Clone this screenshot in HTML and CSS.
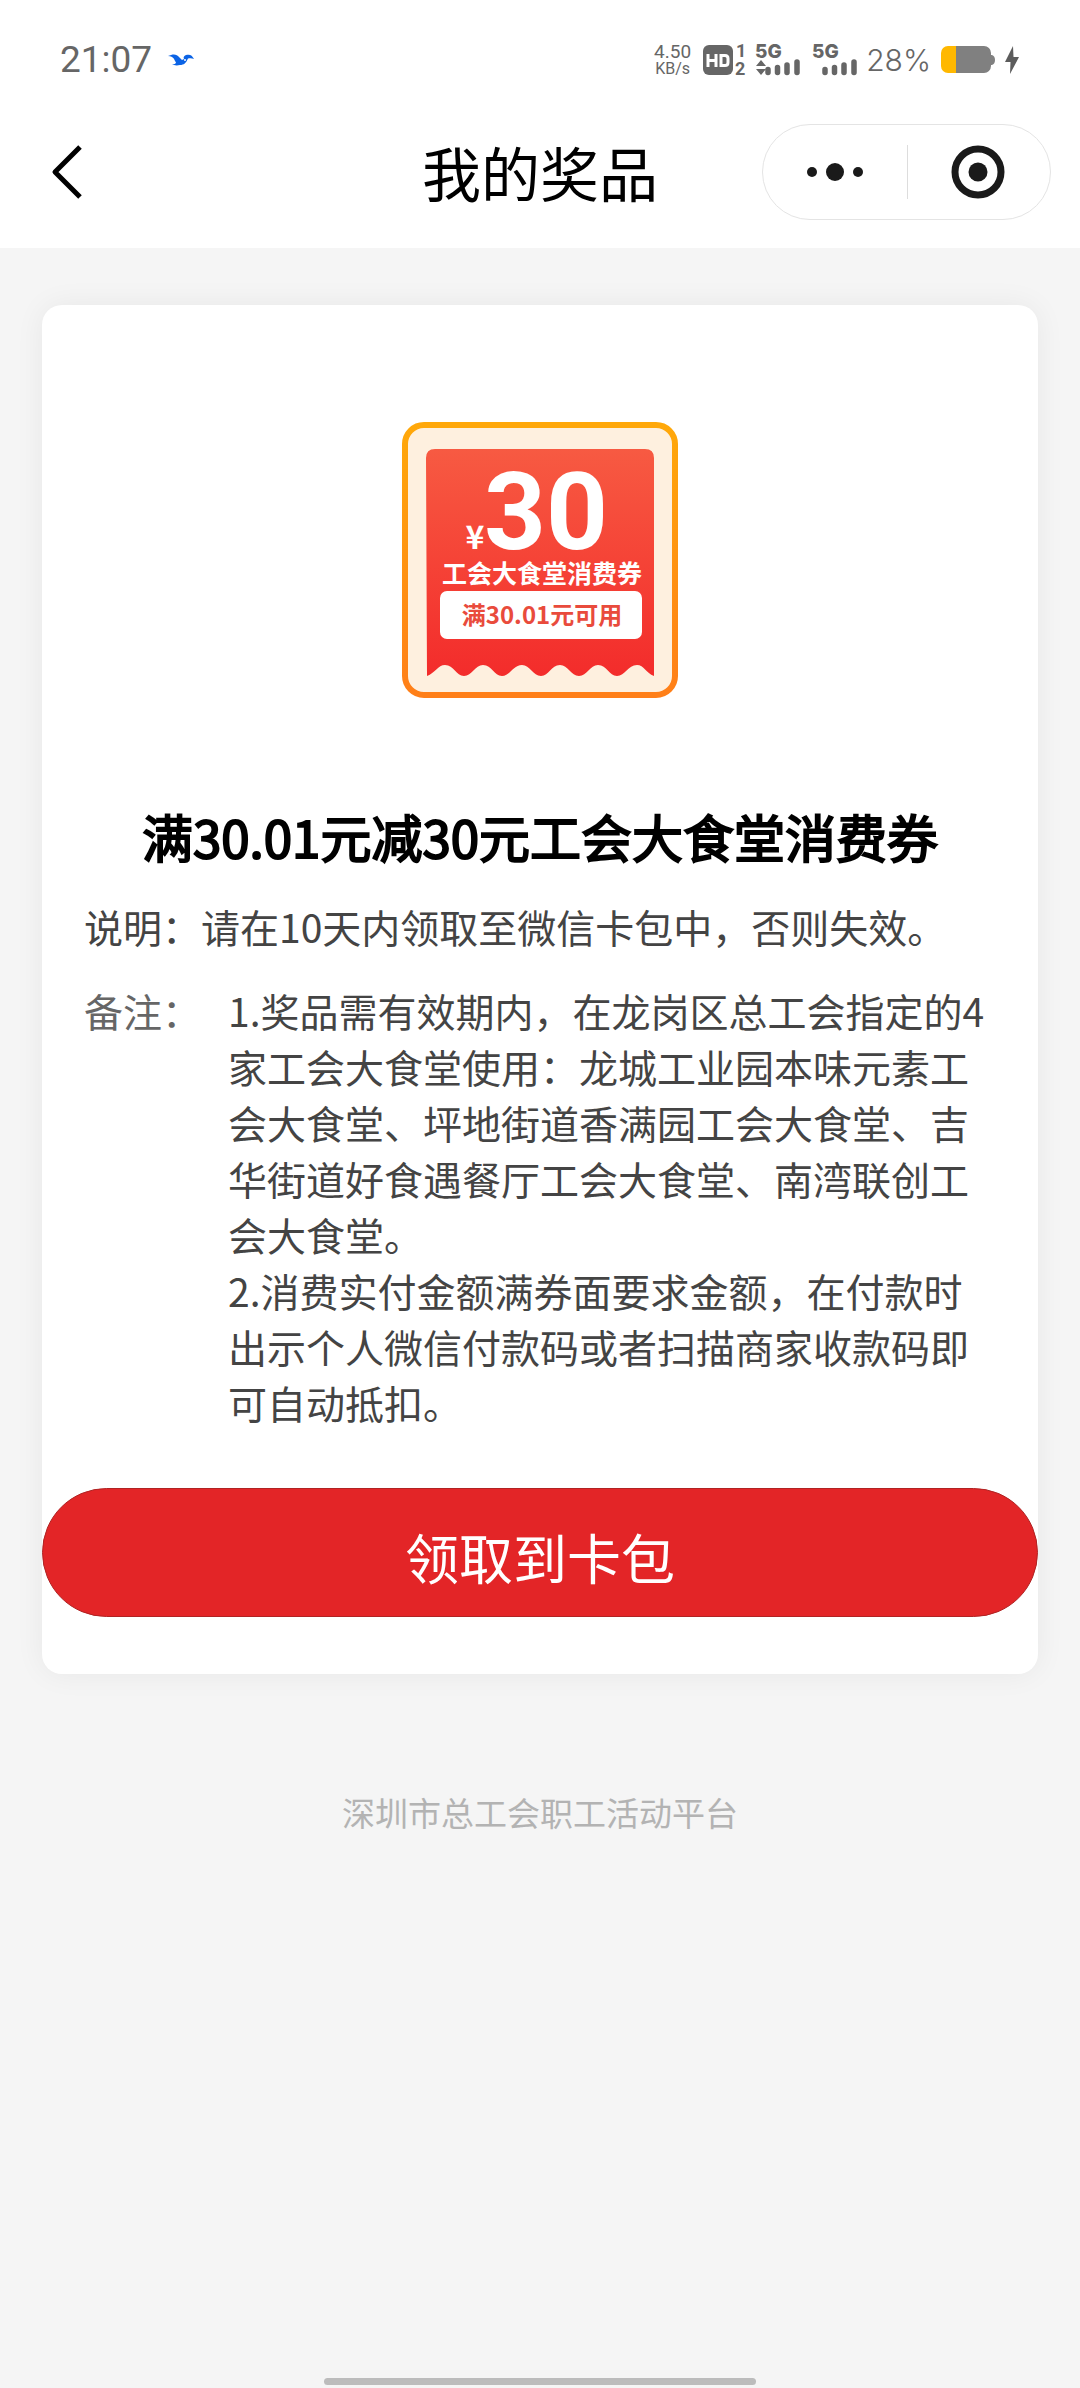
FILE: index.html
```html
<!DOCTYPE html>
<html lang="zh-CN">
<head>
<meta charset="utf-8">
<meta name="viewport" content="width=device-width, initial-scale=1">
<title>我的奖品</title>
<link rel="stylesheet" href="styles.css">
</head>
<body>
<header class="top">
  <div class="status">
    <span class="clock">21:07</span>
    <svg class="bird" width="28" height="12" viewBox="0 0 28 12" aria-hidden="true"><path fill="#0b63e5" d="M0 2C5-.5 9 0 11 3l3 3 2-1c-1-2 0-3 2-4 4-1 6 0 8 4-2-1-4-1-6-.5C18 9 16 11 12 11c-4 1-6 0-8-.5 2 0 4-1 4-2C6 6 6 2 0 2z"/><circle cx="17" cy="6" r="1" fill="#fff"/></svg>
    <div class="indicators">
      <div class="speed"><span>4.50</span><span class="unit">KB/s</span></div>
      <svg class="hd" width="44" height="32" viewBox="0 0 44 32" aria-label="HD">
        <rect x="0" y="1" width="30" height="30" rx="6" fill="#666"/>
        <path d="M5 10v13M13 10v13M5 16.500h8M18 11.500h4q3 0 3 3v4q0 3-3 3h-4z" fill="none" stroke="#fff" stroke-width="3"/>
        <text x="33" y="13" class="tiny">1</text><text x="32" y="31" class="tiny">2</text>
      </svg>
      <svg class="signal" width="46" height="32" viewBox="0 0 46 32" aria-label="5G">
        <text x="0" y="14" class="net">5G</text>
        <path d="M6 16l5 6H1zM6 31l5-6H1z" fill="#666"/>
        <path d="M13 25.500v3M22.500 23.500v5M32 21v7.500M42 18v10.500" stroke="#666" stroke-width="5.500" stroke-linecap="round"/>
      </svg>
      <svg class="signal-two" width="46" height="32" viewBox="0 0 46 32" aria-label="5G">
        <text x="0" y="14" class="net">5G</text>
        <path d="M13 25.500v3M22.500 23.500v5M32 21v7.500M42 18v10.500" stroke="#666" stroke-width="5.500" stroke-linecap="round"/>
      </svg>
      <span class="percent">28%</span>
      <svg class="battery" width="54" height="28" viewBox="0 0 54 28" aria-hidden="true">
        <path d="M15 0h28a7 7 0 0 1 7 7v2h1q3 1 3 5t-3 5h-1v1a7 7 0 0 1-7 7H15z" fill="#808080"/>
        <path d="M15 0H7a7 7 0 0 0-7 7v13a7 7 0 0 0 7 7h8z" fill="#ffb800"/>
      </svg>
      <svg width="14" height="28" viewBox="0 0 14 28" aria-hidden="true"><path d="M8 0L0 16h5.500L5 28l9-17H8.500z" fill="#5c5c5c"/></svg>
    </div>
  </div>
  <nav class="nav">
    <button class="back" aria-label="返回"><svg width="32" height="56" viewBox="0 0 32 56"><path d="M29 3L4 28l25 25" fill="none" stroke="#000" stroke-width="5" stroke-linejoin="round"/></svg></button>
    <h1 class="nav-title">我的奖品</h1>
    <div class="capsule">
      <button class="cap-btn" aria-label="更多"><svg width="56" height="20" viewBox="0 0 56 20"><g fill="#1a1a1a"><circle cx="5" cy="10" r="5"/><circle cx="28" cy="10" r="9"/><circle cx="51" cy="10" r="5"/></g></svg></button>
      <button class="cap-btn" aria-label="关闭"><svg width="54" height="54" viewBox="0 0 54 54"><circle cx="27" cy="27" r="23" fill="none" stroke="#1a1a1a" stroke-width="7"/><circle cx="27" cy="27" r="9.500" fill="#1a1a1a"/></svg></button>
    </div>
  </nav>
</header>
<main class="page">
  <section class="card">
    <svg class="coupon" width="276" height="276" viewBox="0 0 276 276" role="img" aria-label="30元工会大食堂消费券">
      <defs>
        <linearGradient id="frame" x1="0" y1="0" x2="0" y2="1"><stop offset="0" stop-color="#ffa80a"/><stop offset="1" stop-color="#ff7f18"/></linearGradient>
        <linearGradient id="ticket" x1="0" y1="0" x2="0" y2="1"><stop offset="0" stop-color="#f75a42"/><stop offset="1" stop-color="#f32c2b"/></linearGradient>
      </defs>
      <rect x="3" y="3" width="270" height="270" rx="19" fill="#fef0df" stroke="url(#frame)" stroke-width="6"/>
      <path fill="url(#ticket)" d="M24 36q0-9 9-9H243q9 0 9 9V254c-8-3-10-11-17-11c-9 0-12 11-20 11c-8 0-10-11-19-11c-8 0-11 11-19 11c-8 0-11-11-19-11c-9 0-11 11-19 11c-8 0-11-11-19-11c-9 0-12 11-20 11c-8 0-10-11-19-11c-8 0-11 11-19 11c-8 0-10-11-19-11c-7 0-10 8-18 11z"/>
      <text x="144" y="127" class="amount">30</text>
      <text x="73" y="127" class="yen">¥</text>
      <text x="140" y="161" class="caption">工会大食堂消费券</text>
      <rect x="38" y="169" width="202" height="48" rx="7" fill="#fff"/>
      <text x="140" y="202" class="limit">满30.01元可用</text>
    </svg>
    <h2 class="title">满30.01元减30元工会大食堂消费券</h2>
    <p class="desc">说明：请在10天内领取至微信卡包中，否则失效。</p>
    <div class="notes">
      <span class="label">备注：</span>
      <div class="note-text">
        <p>1.奖品需有效期内，在龙岗区总工会指定的4家工会大食堂使用：龙城工业园本味元素工会大食堂、坪地街道香满园工会大食堂、吉华街道好食遇餐厅工会大食堂、南湾联创工会大食堂。</p>
        <p>2.消费实付金额满券面要求金额，在付款时出示个人微信付款码或者扫描商家收款码即可自动抵扣。</p>
      </div>
    </div>
    <button class="claim">领取到卡包</button>
  </section>
  <footer class="footer">深圳市总工会职工活动平台</footer>
</main>
<div class="home-bar"></div>
</body>
</html>
```
FILE: styles.css
```css
* { box-sizing: border-box; }
body {
  margin: 0;
  min-height: 100vh;
  display: flex;
  flex-direction: column;
  background: #f5f5f5;
  color: #444;
  font-family: "Noto Sans CJK SC", sans-serif;
  font-size: 39px;
  line-height: 56px;
}
h1, h2, p { margin: 0; }
svg { display: block; flex: none; overflow: visible; }
button { border: 0; padding: 0; background: none; font: inherit; color: inherit; }

.top { background: #fff; padding-bottom: 24px; }
.status {
  display: flex;
  align-items: center;
  height: 120px;
  padding: 0 61px 0 60px;
  color: #666;
  font-family: Roboto, sans-serif;
}
.clock { font-size: 37px; }
.bird { margin-left: 16px; }
.indicators { display: flex; align-items: center; margin-left: auto; }
.speed { display: flex; flex-direction: column; align-items: center; font-size: 19px; line-height: 17px; }
.unit { font-size: 16px; }
.hd { margin-left: 12px; }
.signal { margin-left: 8px; }
.signal-two { margin-left: 11px; }
.percent { margin: 0 10px 0 8px; font-family: Inter, sans-serif; font-size: 30px; font-weight: 300; }
.battery { margin-right: 10px; }
.tiny { font: bold 18px Roboto, sans-serif; fill: #666; }
.net { font: 800 19px Inter, sans-serif; fill: #666; }

.nav {
  display: grid;
  grid-template-columns: 1fr auto 1fr;
  align-items: center;
  height: 104px;
  padding: 0 29px;
}
.nav-title { font-size: 59px; font-weight: 400; line-height: 72px; color: #000; }
.back { justify-self: start; margin-left: 22px; }
.capsule {
  justify-self: end;
  display: flex;
  width: 289px;
  height: 96px;
  border: 1px solid #e4e4e4;
  border-radius: 48px;
}
.cap-btn { flex: 1; display: flex; align-items: center; justify-content: center; position: relative; }
.cap-btn + .cap-btn::before {
  content: "";
  position: absolute;
  left: 0;
  top: 20px;
  bottom: 20px;
  width: 1px;
  background: #ddd;
}

.page { padding: 57px 42px 0; }
.card {
  background: #fff;
  border-radius: 20px;
  padding: 117px 0 57px;
  box-shadow: 0 0 30px rgba(0, 0, 0, .06);
}
.coupon { margin: 0 auto; }
.coupon text { font-family: "Noto Sans CJK SC", sans-serif; font-weight: 700; fill: #fff; text-anchor: middle; }
.coupon .amount { font-family: Roboto, sans-serif; font-size: 108px; }
.coupon .yen { font-size: 32px; }
.coupon .caption { font-size: 25px; }
.coupon .limit { font-size: 24px; fill: #e94b3c; }
.title {
  margin-top: 100px;
  font-size: 51px;
  font-weight: 400;
  -webkit-text-stroke: 2px #000;
  line-height: 76px;
  text-align: center;
  color: #000;
}
.desc { margin-top: 24px; padding: 0 42px; }
.notes { display: flex; margin-top: 28px; padding: 0 42px; }
.label { flex: none; width: 144px; color: #666; }
.note-text { flex: 1; }
.claim {
  display: block;
  width: 100%;
  height: 129px;
  margin-top: 58px;
  padding-top: 8px;
  border: 1px solid #b02323;
  border-radius: 65px;
  background: #e32527;
  color: #fff;
  font-size: 54px;
}
.footer { margin-top: 113px; font-size: 33px; line-height: 50px; text-align: center; color: #b3b3b3; }
.home-bar { width: 40%; height: 7px; margin: auto auto 3px; border-radius: 4px; background: #bcbcbc; }
```
